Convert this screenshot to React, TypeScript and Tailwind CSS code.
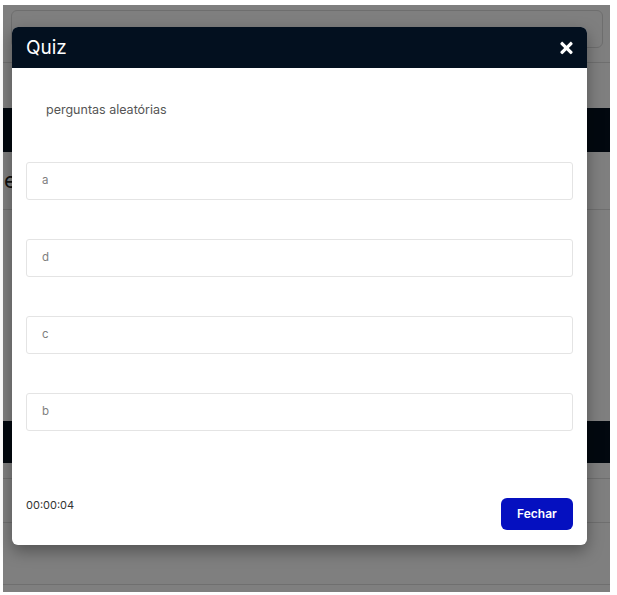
import React from 'react';
import { FaTimes } from 'react-icons/fa';

const options = ['a', 'd', 'c', 'b'];

export default function App() {
  return (
    <div className="relative w-[617px] h-[595px] bg-white overflow-hidden" style={{ fontFamily: 'Inter, "Noto Sans", sans-serif' }}>
      {/* Page behind the dialog */}
      <div className="relative ml-[3px] mt-[5px] w-[607px] h-[587px] bg-white overflow-hidden">
        <div className="h-[38px] mt-[5px] ml-[8px] mr-[7px] border border-[#dcdcdc] rounded-md" />
        <div className="h-[15px] border-b border-[#dedede]" />
        <div className="h-[45px]" />
        <div className="h-[44px] bg-[#04111f]" />
        <div className="h-[58px] border-b border-[#dedede] flex items-center">
          <span className="pl-[1px] text-[22px] text-[#222]">e</span>
        </div>
        <div className="h-[211px]" />
        <div className="h-[42px] bg-[#04111f]" />
        <div className="h-[16px] border-b border-[#dedede]" />
        <div className="h-[44px] border-b border-[#dedede]" />
        <div className="h-[62px] border-b border-[#dedede]" />

        {/* Backdrop */}
        <div className="absolute inset-0 bg-black/50" />
      </div>

      {/* Quiz dialog */}
      <div className="absolute left-[12px] top-[27px] w-[575px] bg-white rounded-md shadow-[0_6px_16px_rgba(0,0,0,0.35)] flex flex-col">
        <div className="h-[41px] px-[14px] flex items-center justify-between bg-[#03101f] rounded-t-md">
          <h1 className="text-[19px] leading-none text-white">Quiz</h1>
          <FaTimes className="text-white w-[13px] h-[18px]" />
        </div>

        <div className="px-[14px] pt-[34px] pb-[15px] flex flex-col">
          <p className="pl-[20px] text-[12.5px] leading-[16px] text-[#555]">perguntas aleatórias</p>

          <div className="mt-[44px] flex flex-col gap-[39px]">
            {options.map((o) => (
              <div key={o} className="h-[38px] flex items-center pl-[15px] border border-[#e4e4e4] rounded-[3px] text-[11.5px] text-[#808080]">
                {o}
              </div>
            ))}
          </div>

          <div className="mt-[67px] flex items-start justify-between">
            <span className="text-[11px] leading-[14px] text-[#333]">00:00:04</span>
            <button className="w-[72px] h-[32px] rounded-md bg-[#0510c0] text-white text-[12px] font-semibold">
              Fechar
            </button>
          </div>
        </div>
      </div>
    </div>
  );
}
